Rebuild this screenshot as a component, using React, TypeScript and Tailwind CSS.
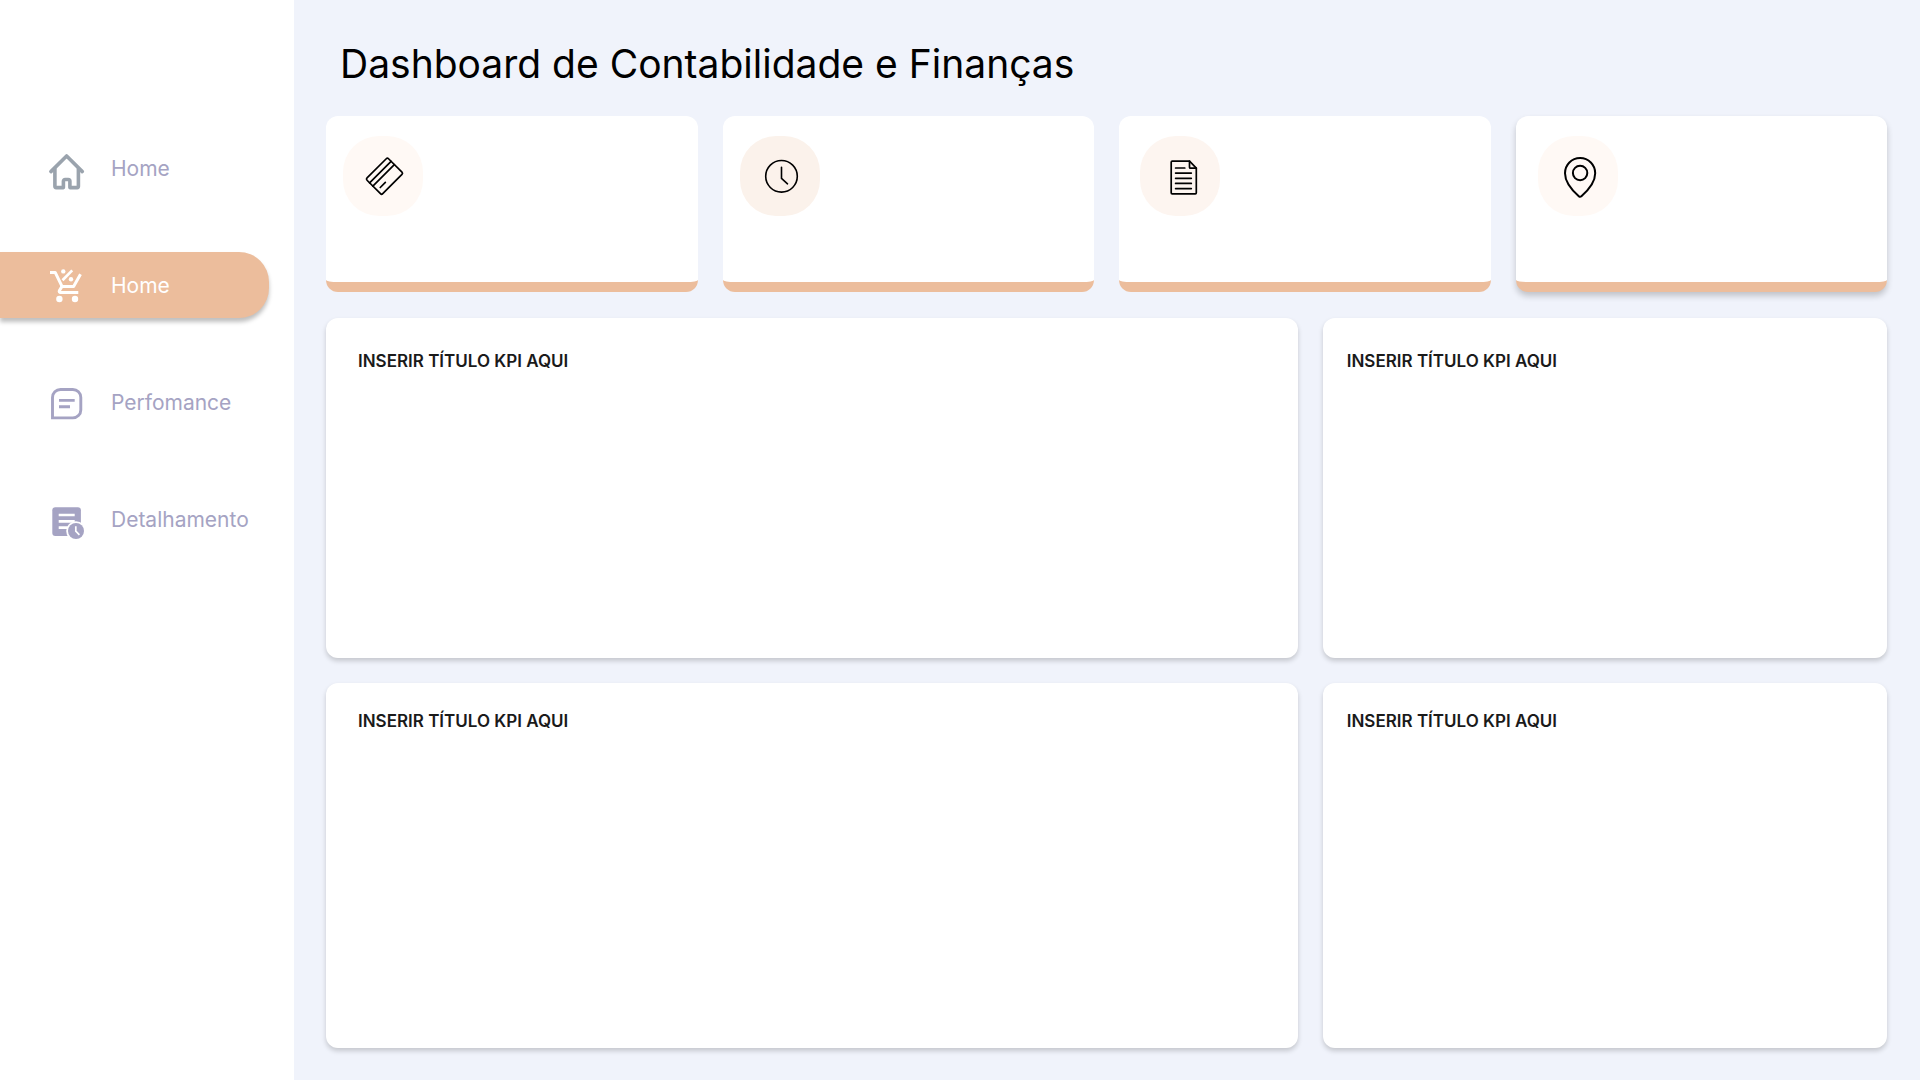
import type { ReactNode } from "react";

const navItems = [
  {
    label: "Home",
    active: false,
    icon: (
      <svg viewBox="0 0 48 48" className="w-12 h-12 text-[#9aa3ad]" fill="none" stroke="currentColor" strokeWidth="3.6" strokeLinecap="round" strokeLinejoin="round" aria-hidden="true">
        <path d="M8.9 27.6 24.6 12l15.7 15.6" />
        <path d="M12.9 25v17.3a1.3 1.3 0 0 0 1.3 1.3h7.2v-6.4a1.7 1.7 0 0 1 1.7-1.7h3.1a1.7 1.7 0 0 1 1.7 1.7v6.4h7.2a1.3 1.3 0 0 0 1.3-1.3V25" />
      </svg>
    ),
  },
  {
    label: "Home",
    active: true,
    icon: (
      <svg viewBox="0 0 48 48" className="w-12 h-12" fill="none" stroke="currentColor" strokeWidth="3" aria-hidden="true">
        <path d="M8 11.4h5.2L20 25.4h11.6l6.9-12.2" strokeLinejoin="round" />
        <path d="m20 25.4-2.6 4.2c-.6 1 .1 2 1.2 2h17.7" strokeLinejoin="round" />
        <path d="M20.5 19.2 30.2 9.4" strokeWidth="2.7" />
        <g fill="currentColor" stroke="none">
          <circle cx="21.3" cy="10.4" r="2.2" />
          <circle cx="29" cy="18.3" r="2.2" />
          <circle cx="17.4" cy="38" r="3.2" />
          <circle cx="33" cy="38" r="3.2" />
        </g>
      </svg>
    ),
  },
  {
    label: "Perfomance",
    active: false,
    icon: (
      <svg viewBox="0 0 48 48" className="w-12 h-12" fill="none" stroke="currentColor" strokeWidth="2.9" aria-hidden="true">
        <path d="M10.5 39.9V19.5a8 8 0 0 1 8-8h12.3a8 8 0 0 1 8 8v12.4a8 8 0 0 1-8 8z" />
        <path d="M17 22.4h15.7M17 28.7h11" />
      </svg>
    ),
  },
  {
    label: "Detalhamento",
    active: false,
    icon: (
      <svg viewBox="0 0 48 48" className="w-12 h-12" fill="none" aria-hidden="true">
        <rect x="10.3" y="12.3" width="28.6" height="28.7" rx="3" fill="currentColor" />
        <path d="M16.7 20h16M16.7 26.3h16M16.7 32.7h9" stroke="#fff" strokeWidth="2.7" />
        <circle cx="34" cy="36" r="9.8" fill="#fff" />
        <circle cx="34" cy="36" r="8" fill="currentColor" />
        <path d="M33.8 31.2v5l3.6 3.6" stroke="#fff" strokeWidth="1.7" />
      </svg>
    ),
  },
];

const cards = [
  {
    name: "card",
    card: "pl-[17px]",
    circle: "bg-[#fff9f5]",
    icon: (
      <g transform="translate(41.5 40.2) rotate(-45)" strokeWidth="1.7">
        <rect x="-15.2" y="-11.1" width="30.4" height="22.2" rx="1.6" />
        <path d="M-15.2-5.9h30.4M-15.2-1.3h30.4M-11 5h7.2" />
      </g>
    ),
  },
  {
    name: "clock",
    card: "pl-[17px]",
    circle: "bg-[#fbf2eb]",
    icon: (
      <g strokeWidth="1.6">
        <circle cx="41.5" cy="40.3" r="15.8" />
        <path d="M41.5 31.2v11.2l6 5.4" />
      </g>
    ),
  },
  {
    name: "document",
    card: "pl-[21px]",
    circle: "bg-[#fdf5f0]",
    icon: (
      <g strokeWidth="1.7">
        <path d="M32.2 25.2h17.3l6.8 7v24.6a1 1 0 0 1-1 1H32.2a1 1 0 0 1-1-1V26.2a1 1 0 0 1 1-1z" />
        <path d="M49.5 25.2v6a1 1 0 0 0 1 1h5.8" />
        <path d="M35.6 32h9.2M35.6 37.1h15.7M35.6 42.3h15.7M35.6 47.4h15.7M35.6 52.6h15.7" />
      </g>
    ),
  },
  {
    name: "location",
    card: "pl-[22px] shadow-[0_4px_6px_rgba(0,0,0,0.2)]",
    circle: "bg-[#fff9f5]",
    icon: (
      <g strokeWidth="2">
        <path d="M42.1 22C33.6 22 27 28.8 27 37.2c0 9.3 6.8 16.8 13.8 23a2 2 0 0 0 2.6 0c7-6.2 13.8-13.7 13.8-23C57.2 28.8 50.6 22 42.1 22z" />
        <circle cx="42.1" cy="37" r="7.2" />
      </g>
    ),
  },
];

function Panel({ pad }: { pad: string }) {
  return (
    <section className={`bg-white rounded-xl shadow-[0_3px_5px_rgba(0,0,0,0.18)] ${pad}`}>
      <h2 className="font-['Inter',sans-serif] font-semibold text-[17px] leading-6 text-[#1a1a1a]">INSERIR TÍTULO KPI AQUI</h2>
    </section>
  );
}

function CardIcon({ children, bg }: { children: ReactNode; bg: string }) {
  return (
    <div className={`w-20 h-20 rounded-[36px] ${bg}`}>
      <svg viewBox="0 0 80 80" className="w-20 h-20" fill="none" stroke="#000" strokeLinecap="round" strokeLinejoin="round" aria-hidden="true">
        {children}
      </svg>
    </div>
  );
}

export default function App() {
  return (
    <div className="min-h-screen flex bg-[#f0f3fb]">
      <nav className="w-[294px] shrink-0 bg-white pt-[135px]">
        <ul className="flex flex-col gap-[51px]">
          {navItems.map((item, i) => (
            <li key={i}>
              <a
                href="#"
                className={`flex items-center gap-[21px] h-[66px] pl-[42px] mr-[25px] text-[21px] font-['Inter',sans-serif] ${
                  item.active
                    ? "bg-[#ecbd9c] text-white rounded-r-[30px] shadow-[0_4px_4px_rgba(0,0,0,0.25)]"
                    : "text-[#a5a3c3]"
                }`}
              >
                {item.icon}
                <span className="pt-0.5">{item.label}</span>
              </a>
            </li>
          ))}
        </ul>
      </nav>

      <main className="flex-1 flex flex-col pl-8 pr-[33px] pb-8">
        <h1 className="pt-[38px] pb-[26px] pl-[14px] font-['Inter',sans-serif] text-[39px] leading-[52px] text-black">
          Dashboard de Contabilidade e Finanças
        </h1>

        <div className="grid grid-cols-4 gap-[25px]">
          {cards.map((c) => (
            <div key={c.name} className={`h-44 pt-5 bg-white rounded-xl border-b-[10px] border-[#ecbd9c] ${c.card}`}>
              <CardIcon bg={c.circle}>{c.icon}</CardIcon>
            </div>
          ))}
        </div>

        <div className="flex-1 grid grid-cols-[31fr_18fr] grid-rows-[340fr_365fr] gap-[25px] mt-[26px]">
          <Panel pad="pl-8 pt-[31px]" />
          <Panel pad="pl-6 pt-[31px]" />
          <Panel pad="pl-8 pt-[26px]" />
          <Panel pad="pl-6 pt-[26px]" />
        </div>
      </main>
    </div>
  );
}
